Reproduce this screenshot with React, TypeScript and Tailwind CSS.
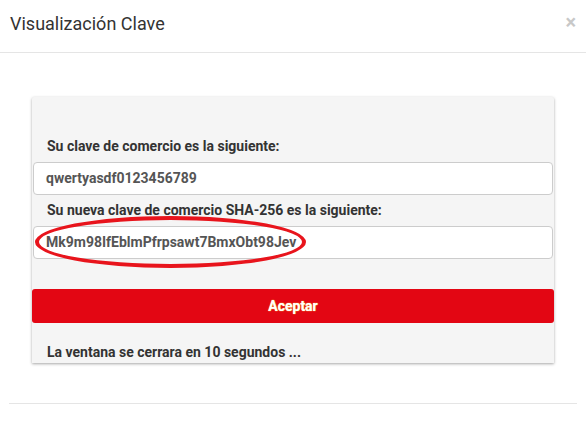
export default function App() {
  return (
    <div className="w-[586px] h-[424px] bg-white font-['Roboto',sans-serif] text-[#333] overflow-hidden">
      {/* header */}
      <div className="h-[53px] border-b border-[#e5e5e5] flex items-center justify-between pl-[10px] pr-[10px]">
        <h4 className="text-[18px] leading-none -mt-[4px]">Visualización Clave</h4>
        <span className="text-[20px] leading-none text-[#c8c8c8] font-bold -mt-[8px]">×</span>
      </div>

      {/* body */}
      <div className="pt-[44px] px-[32px]">
        <div className="bg-[#f5f5f5] w-[522px] shadow-[0_1px_3px_rgba(0,0,0,0.35)] rounded-t-[2px] pt-[39px] pb-[1px] flex flex-col">
          <label className="pl-[15px] h-[20px] leading-[20px] text-[14px] font-bold mb-[6px]">
            Su clave de comercio es la siguiente:
          </label>
          <div className="mx-[1px] h-[33px] bg-white border border-[#ccc] rounded-[4px] flex items-center pl-[12px] text-[14px] font-bold text-[#555]">
            qwertyasdf0123456789
          </div>
          <label className="pl-[15px] h-[20px] leading-[20px] text-[14px] font-bold mt-[5px] mb-[6px]">
            Su nueva clave de comercio SHA-256 es la siguiente:
          </label>
          <div className="relative mx-[1px] h-[33px] bg-white border border-[#ccc] rounded-[4px] flex items-center pl-[12px] text-[14px] font-bold text-[#555]">
            Mk9m98IfEblmPfrpsawt7BmxObt98Jev
            {/* hand-drawn highlight ring */}
            <div className="absolute left-[1px] top-[-11px] w-[271px] h-[52px] rounded-[50%] border-[4px] border-[#e8141c] pointer-events-none" />
          </div>
          <button className="mt-[30px] h-[34px] w-full bg-[#e30613] rounded-[3px] text-white text-[14px] font-bold [text-shadow:0_0_1px_#f7c948,0_0_1px_#f7c948]">
            Aceptar
          </button>
          <p className="mt-[19px] pl-[15px] h-[20px] leading-[20px] text-[14px] font-bold">
            La ventana se cerrara en 10 segundos ...
          </p>
        </div>
      </div>

      {/* footer */}
      <div className="mt-[40px] mx-[9px] border-t border-[#e5e5e5]" />
    </div>
  );
}
